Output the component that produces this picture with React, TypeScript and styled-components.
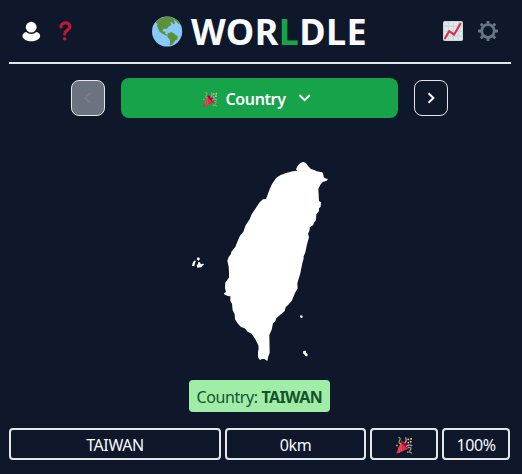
import React from "react";
import styled, { createGlobalStyle } from "styled-components";

const GlobalStyle = createGlobalStyle`
  *, *::before, *::after { box-sizing: border-box; }
  body {
    margin: 0;
    background: #0f172a;
    color: #f8fafc;
    font: 16px/24px "Noto Sans", "Open Sans", sans-serif;
    overflow: hidden;
  }
`;

const Page = styled.main`
  display: flex;
  flex-direction: column;
  width: 502px;
  height: 474px;
  margin-left: 9px;
`;

const Header = styled.header`
  display: flex;
  align-items: center;
  height: 64px;
  padding: 0 13px;
  border-bottom: 2px solid #e5e7eb;
`;

const IconGroup = styled.div<{ $gap: number }>`
  display: flex;
  align-items: center;
  gap: ${(p) => p.$gap}px;
`;

const IconButton = styled.button`
  display: flex;
  padding: 0;
  border: 0;
  background: none;
  color: inherit;
`;

const Title = styled.h1`
  display: flex;
  align-items: center;
  flex: 1;
  margin: 0 0 0 80px;
  gap: 8px;
  font-size: 36px;
  line-height: 40px;
  font-weight: 700;
`;

const Word = styled.span`
  padding-top: 2px;
  letter-spacing: 0.4px;
  white-space: nowrap;
`;

const Accent = styled.span`
  color: #16a34a;
`;

const RoundNav = styled.nav`
  display: flex;
  align-items: center;
  justify-content: center;
  gap: 16px;
  height: 40px;
  margin: 14px 2px 0 0;
`;

const StepButton = styled.button<{ $muted?: boolean }>`
  display: flex;
  align-items: center;
  justify-content: center;
  width: 34px;
  height: 36px;
  padding: 2px 0 0;
  border: 1px solid #e5e7eb;
  border-radius: 8px;
  color: ${(p) => (p.$muted ? "#807e7c" : "#fff")};
  background: ${(p) => (p.$muted ? "#6b7280" : "transparent")};
`;

const RoundPicker = styled.button`
  display: flex;
  align-items: center;
  width: 277px;
  height: 40px;
  padding: 2px 0 0 82px;
  border: 0;
  border-radius: 8px;
  color: #fff;
  background: #16a34a;
  font: inherit;
  font-weight: 600;
`;

const PickerLabel = styled.span`
  width: 60px;
  margin: 0 12px 0 8px;
  letter-spacing: -0.38px;
  text-align: left;
`;

const MapArea = styled.div`
  display: flex;
  justify-content: center;
  height: 215px;
  margin: 37px 0 0;
`;

const Answer = styled.div`
  align-self: center;
  width: 141px;
  height: 32px;
  margin: 10px 2px 16px 0;
  padding: 5px 0 0 8px;
  border-radius: 4px;
  color: #14532d;
  background: #a0eda8;
  white-space: nowrap;
  letter-spacing: -0.4px;
`;

const AnswerName = styled.b`
  letter-spacing: -0.6px;
`;

const GuessRow = styled.div`
  display: grid;
  grid-template-columns: 212px 141px 68px 68px;
  gap: 4px;
`;

const GuessCell = styled.div`
  display: flex;
  align-items: center;
  justify-content: center;
  height: 32px;
  padding-top: 2px;
  border: 2px solid #e5e7eb;
  border-radius: 4px;
  letter-spacing: -0.4px;
`;

const PersonIcon = () => (
  <svg width="19" height="22" viewBox="0 0 19 22" fill="#fff">
    <circle cx="9.2" cy="7.2" r="5.4" />
    <path d="M4.3 12C2 12.5.4 14.1.4 15.9c0 2.7 4.6 5.4 8.9 5.4s8.9-2.7 8.9-5.4c0-1.8-1.6-3.4-3.9-3.9-1.3 1.2-2.9 1.9-5 1.9s-3.7-.7-5-1.9Z" />
  </svg>
);

const QuestionIcon = () => (
  <svg width="13" height="20" viewBox="0 0 13 20">
    <path d="M2 5.8C2 .8 10.9.5 10.9 5.4c0 4-5.2 3.5-5.2 7.6" fill="none" stroke="#be1931" strokeWidth="3.2" strokeLinecap="round" />
    <circle cx="5.7" cy="17.7" r="1.8" fill="#be1931" />
  </svg>
);

const GlobeIcon = () => (
  <svg width="31" height="31" viewBox="0 0 31 31">
    <circle cx="15.1" cy="15.5" r="15.1" fill="#88c9f9" />
    <g fill="#5c913b">
      <path d="M3.3 6.4C6 3.2 9 1.8 13 .7l5 .1 5 2.2-1 1.6 1.2 2.3-1.7 1.4-1.4-2-1.7.3.9 2.4-2.8 1.5-1.6 2.6-2.6-.3-1.8 1.3.7 1.7 2.3-.4-.3 2.3 2.3 1-.8 1-3.4-1.4-3.5-2.3-1.7-3.4L5 9.8l.8-1.9Z" />
      <path d="m23.4 2.6 3.3 2.8 2 3.4-2.8-1.4-1.2-2-2-.9Z" />
      <path d="m15.6 17.4 3.5-1.4 3.2 1.4 1.4 1.8 2.1.8-.4 3.4-2.6 1.4-1.2 2.5-3 2.2-1.2-.6.8-3-.8-2.8-2.1-1.8Z" />
    </g>
  </svg>
);

const ChartIcon = () => (
  <svg width="20" height="20" viewBox="0 0 20 20">
    <rect width="20" height="20" rx="1.8" fill="#ccd6dd" />
    <path d="M1 1h3.8v3.5H1zM6 1h3.8v3.5H6zM11 1h3.8v3.5H11zM16 1h3v3.5h-3zM1 6h3.8v3.5H1zM6 6h3.8v3.5H6zM11 6h3.8v3.5H11zM16 6h3v3.5h-3zM1 11h3.8v3.5H1zM6 11h3.8v3.5H6zM11 11h3.8v3.5H11zM16 11h3v3.5h-3zM1 16h3.8v3H1zM6 16h3.8v3H6zM11 16h3.8v3H11zM16 16h3v3h-3z" fill="#e1e8ed" />
    <path d="m2.1 17.3 4-7.1 4.9 3.5 6.4-11" fill="none" stroke="#dd2e44" strokeWidth="2.1" strokeLinecap="round" strokeLinejoin="round" />
  </svg>
);

const GearIcon = () => (
  <svg width="20" height="20" viewBox="0 0 20 20" fill="none" stroke="#66757f">
    <circle cx="10" cy="10" r="6.3" strokeWidth="2.8" />
    <path d="M10 0v4M10 16v4M0 10h4M16 10h4M2.7 2.7l3.1 3.1M14.2 14.2l3.1 3.1M17.3 2.7l-3.1 3.1M5.8 14.2l-3.1 3.1" strokeWidth="2.9" />
  </svg>
);

const PartyIcon = ({ size }: { size: number }) => (
  <svg width={size} height={size} viewBox="0 0 36 36" fill="none">
    <path d="M11.6 7.6 28 24 3.5 34.8Q.6 36 1.2 32.5Z" fill="#dd2e44" />
    <path d="m9.5 13 3.5 16.7-2 .9-2.8-14.3ZM7 18.7l1.4 13.7-2 .7-1-10.4Z" fill="#ea596e" />
    <ellipse cx="19.7" cy="16.4" rx="3.2" ry="10.8" transform="rotate(-45 19.7 16.4)" fill="#a0041e" />
    <path d="M18 13c4-3 5-7 2-12" stroke="#aa8dd8" strokeWidth="3" />
    <path d="M21.5 20c4-4 8-4 13-1" stroke="#aa8dd8" strokeWidth="3" />
    <path d="M5 1c6 1 4 4 2 8s2 5 4 5M25 22c7-1 8 2 5 6s-1 5 4 6" stroke="#77b255" strokeWidth="2.7" />
    <g fill="#ffcc4d"><circle cx="26" cy="5" r="2" /><circle cx="32" cy="4" r="2" /><circle cx="31" cy="10" r="2" /><circle cx="26" cy="12" r="1.8" /></g>
    <g fill="#aa8dd8"><circle cx="2" cy="18" r="2" /><circle cx="25" cy="32" r="2" /></g>
  </svg>
);

type Direction = "left" | "right" | "down";
const arrows: Record<Direction, string> = {
  left: "m9.4 1-5 5 5 5",
  right: "m4.6 1.2 4.8 4.8-4.8 4.8",
  down: "m1.4 3 5.2 5.2L11.8 3",
};
const Arrow = ({ direction }: { direction: Direction }) => (
  <svg width="14" height="14" viewBox="0 0 14 14">
    <path d={arrows[direction]} fill="none" stroke="currentColor" strokeWidth="2" />
  </svg>
);

const TaiwanMap = () => (
  <svg width="160" height="215" viewBox="0 0 480 645" fill="#fff">
    <path d="M362 23 370 21 378 24 384 33 393 42 403 45 410 49 427 52 430 58 431 66 435 70 444 72 440 77 428 81 421 89 415 102 417 138 423 142 422 155 417 160 417 168 409 178 408 195 403 202 399 211 390 216 388 228 384 236 387 247 381 268 376 292 371 304 370 325 371 310 367 325 361 355 352 385 353 400 345 414 335 438 327 447 317 457 314 468 300 480 289 490 286 499 279 505 275 524 268 540 269 594 265 604 262 618 253 612 246 612 240 615 234 607 234 592 236 580 235 571 226 553 215 536 203 530 194 520 183 516 175 508 165 493 164 478 158 466 156 446 151 438 151 424 143 423 132 418 133 414 138 411 135 400 136 382 142 375 147 367 147 352 146 335 142 317 146 306 153 297 154 290 166 276 172 260 180 242 190 230 197 211 209 193 215 178 227 160 239 142 249 133 258 132 264 116 269 103 276 87 289 68 302 60 321 53 338 49 352 47 348 43 354 31Z" />
    <path d="m53 307 5 1 2 5-5 4-5-4ZM42 317l6 0-3 7-2 9-7 0 2-9ZM55 321l5 1 2 5 9-1 0 4-5 3-2 4-12 1-2-7 4-4ZM361 481l7 1-1 7-4 0-3-4ZM370 588l8-1 0 6 5 5-1 6-5 0-3-5-5-4Z" />
  </svg>
);

export default function App() {
  return (
    <>
      <GlobalStyle />
      <Page>
        <Header>
          <IconGroup $gap={18}>
            <IconButton aria-label="Account"><PersonIcon /></IconButton>
            <IconButton aria-label="Help"><QuestionIcon /></IconButton>
          </IconGroup>
          <Title>
            <GlobeIcon />
            <Word>WOR<Accent>L</Accent>DLE</Word>
          </Title>
          <IconGroup $gap={15}>
            <IconButton aria-label="Statistics"><ChartIcon /></IconButton>
            <IconButton aria-label="Settings"><GearIcon /></IconButton>
          </IconGroup>
        </Header>
        <RoundNav>
          <StepButton $muted aria-label="Previous"><Arrow direction="left" /></StepButton>
          <RoundPicker>
            <PartyIcon size={15} />
            <PickerLabel>Country</PickerLabel>
            <Arrow direction="down" />
          </RoundPicker>
          <StepButton aria-label="Next"><Arrow direction="right" /></StepButton>
        </RoundNav>
        <MapArea><TaiwanMap /></MapArea>
        <Answer>Country: <AnswerName>TAIWAN</AnswerName></Answer>
        <GuessRow>
          <GuessCell>TAIWAN</GuessCell>
          <GuessCell>0km</GuessCell>
          <GuessCell><PartyIcon size={17} /></GuessCell>
          <GuessCell>100%</GuessCell>
        </GuessRow>
      </Page>
    </>
  );
}
